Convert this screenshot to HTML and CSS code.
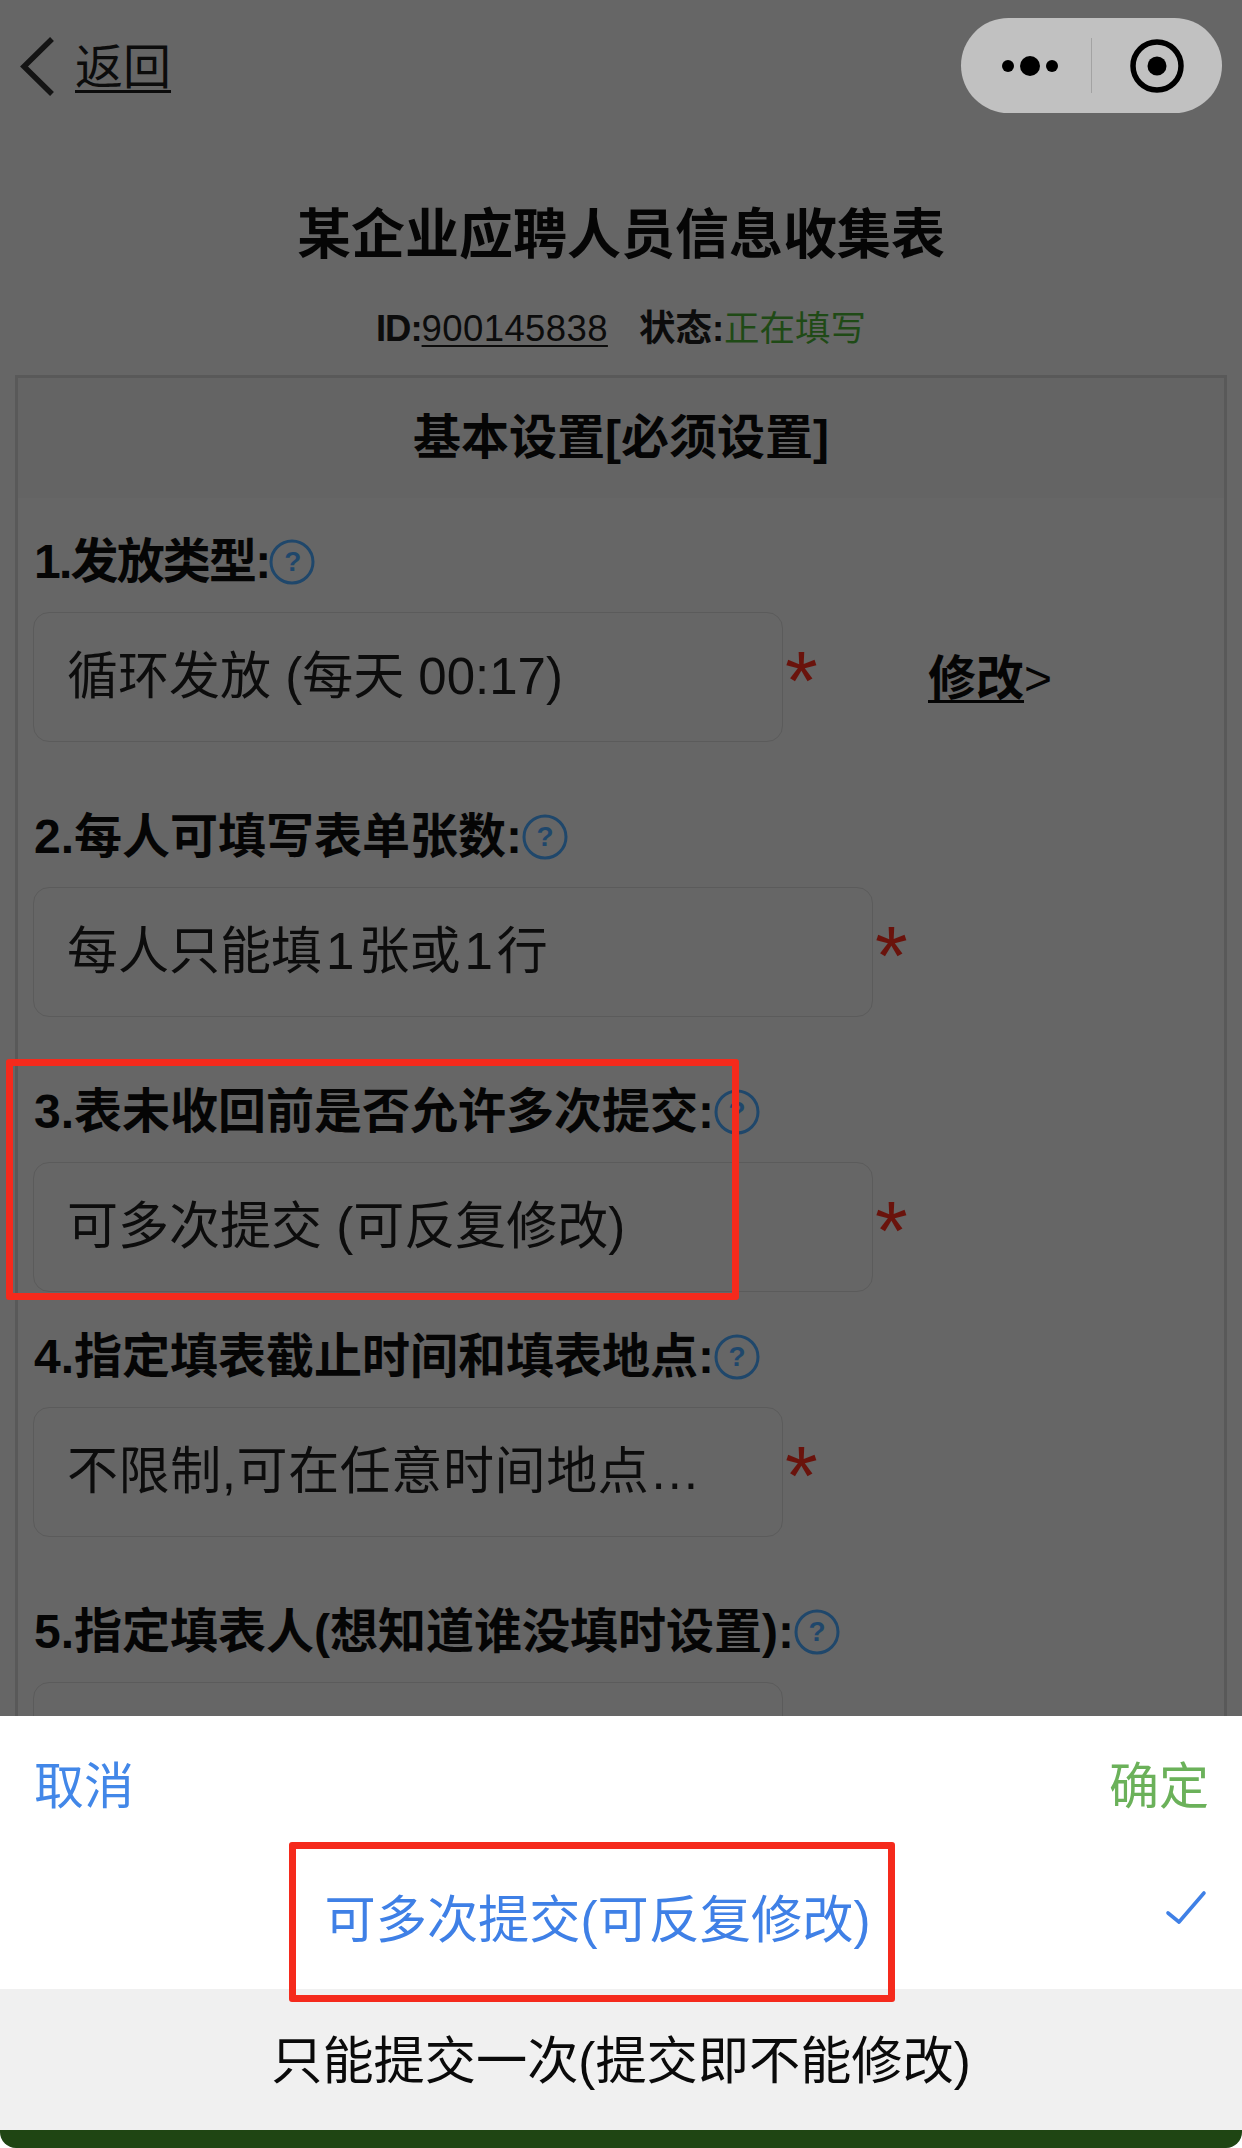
FILE: index.html
```html
<!DOCTYPE html>
<html lang="zh-CN">
<head>
<meta charset="utf-8">
<title>某企业应聘人员信息收集表</title>
<link rel="stylesheet" href="styles.css">
</head>
<body>
<div class="page">
  <header class="nav">
    <a class="back">
      <svg class="chevron" width="36" height="60" viewBox="0 0 36 60"><polyline points="33,2 5,29.5 33,57" fill="none" stroke="#141414" stroke-width="5.5"/></svg>
      <span class="back-text">返回</span>
    </a>
    <div class="capsule">
      <div class="cap-part cap-more">
        <svg width="60" height="24" viewBox="0 0 60 24"><circle cx="8" cy="12" r="6"/><circle cx="30" cy="12" r="10"/><circle cx="52" cy="12" r="6"/></svg>
      </div>
      <div class="cap-divider"></div>
      <div class="cap-part">
        <svg width="58" height="58" viewBox="0 0 58 58"><circle cx="29" cy="29" r="24" fill="none" stroke="#000" stroke-width="5.5"/><circle cx="29" cy="29" r="9.5"/></svg>
      </div>
    </div>
  </header>

  <h1 class="title">某企业应聘人员信息收集表</h1>
  <p class="meta">
    <span class="meta-item"><b class="meta-key">ID:</b><span class="meta-id">900145838</span></span>
    <span class="meta-item"><b>状态:</b><span class="meta-status">正在填写</span></span>
  </p>

  <section class="box">
    <h2 class="box-head">基本设置[必须设置]</h2>
    <div class="rows">
      <div class="row">
        <div class="label label-narrow">1.发放类型:<svg class="help" viewBox="0 0 46 46"><circle cx="23" cy="23" r="21" fill="none" stroke="#1f476b" stroke-width="3"/><text x="23" y="32" text-anchor="middle" class="help-mark">?</text></svg></div>
        <div class="control">
          <div class="field field-short">循环发放 (每天 00:17)</div>
          <span class="star">*</span>
          <a class="edit"><span class="edit-text">修改</span>&gt;</a>
        </div>
      </div>
      <div class="row">
        <div class="label">2.每人可填写表单张数:<svg class="help" viewBox="0 0 46 46"><circle cx="23" cy="23" r="21" fill="none" stroke="#1f476b" stroke-width="3"/><text x="23" y="32" text-anchor="middle" class="help-mark">?</text></svg></div>
        <div class="control">
          <div class="field field-long">每人只能填<span class="num">1</span>张或<span class="num">1</span>行</div>
          <span class="star">*</span>
        </div>
      </div>
      <div class="row row-tight">
        <div class="label">3.表未收回前是否允许多次提交:<svg class="help" viewBox="0 0 46 46"><circle cx="23" cy="23" r="21" fill="none" stroke="#1f476b" stroke-width="3"/><text x="23" y="32" text-anchor="middle" class="help-mark">?</text></svg></div>
        <div class="control">
          <div class="field field-long">可多次提交 (可反复修改)</div>
          <span class="star">*</span>
        </div>
      </div>
      <div class="row">
        <div class="label">4.指定填表截止时间和填表地点:<svg class="help" viewBox="0 0 46 46"><circle cx="23" cy="23" r="21" fill="none" stroke="#1f476b" stroke-width="3"/><text x="23" y="32" text-anchor="middle" class="help-mark">?</text></svg></div>
        <div class="control">
          <div class="field field-short field-spaced">不限制,可在任意时间地点…</div>
          <span class="star">*</span>
        </div>
      </div>
      <div class="row">
        <div class="label">5.指定填表人(想知道谁没填时设置):<svg class="help" viewBox="0 0 46 46"><circle cx="23" cy="23" r="21" fill="none" stroke="#1f476b" stroke-width="3"/><text x="23" y="32" text-anchor="middle" class="help-mark">?</text></svg></div>
        <div class="control">
          <div class="field field-short"></div>
        </div>
      </div>
    </div>
  </section>

  <div class="sheet">
    <div class="sheet-head">
      <span class="sheet-cancel">取消</span>
      <span class="sheet-ok">确定</span>
    </div>
    <div class="option option-selected">
      <span class="option-text">可多次提交(可反复修改)</span>
      <svg class="check" width="46" height="40" viewBox="0 0 46 40"><polyline points="3,23 14,32 39,3" fill="none" stroke="#3f80e6" stroke-width="3.6" stroke-linecap="round" stroke-linejoin="round"/></svg>
    </div>
    <div class="option option-plain">只能提交一次(提交即不能修改)</div>
    <div class="sheet-bar"></div>
  </div>

  <div class="mark mark-field"></div>
  <div class="mark mark-option"></div>
</div>
</body>
</html>
```
FILE: styles.css
```css
* { box-sizing: border-box; }
html, body { margin: 0; padding: 0; }
body { background: #666; }
.page {
  position: relative;
  width: 1242px;
  height: 2148px;
  overflow: hidden;
  background: #666;
  color: #050505;
  font-family: "Liberation Sans", "Noto Sans CJK SC", sans-serif;
}

/* navigation */
.nav {
  display: flex;
  justify-content: space-between;
  align-items: flex-start;
  height: 131px;
  padding: 18px 20px 0 19px;
}
.back { display: flex; align-items: center; height: 95px; }
.chevron { display: block; margin-top: 2px; }
.back-text {
  margin: 5px 0 0 20px;
  font-size: 48px;
  line-height: 60px;
  color: #0c0c0c;
  text-decoration: underline;
  text-underline-offset: 6px;
  text-decoration-thickness: 3px;
}
.capsule {
  display: flex;
  align-items: center;
  width: 261px;
  height: 95px;
  border-radius: 48px;
  background: #c1c1c1;
}
.cap-part { flex: 1; display: flex; justify-content: center; align-items: center; }
.cap-part svg { display: block; }
.cap-more { flex: none; width: 130px; padding-left: 8px; }
.cap-divider { width: 1px; height: 55px; background: #a3a3a3; }

/* heading */
.title {
  margin: 64px 0 0;
  font-size: 54px;
  line-height: 80px;
  font-weight: 700;
  text-align: center;
}
.meta {
  display: flex;
  justify-content: center;
  gap: 31px;
  margin: 34px 0 0;
  font-size: 36.5px;
  line-height: 40px;
  color: #0c0c0c;
}
.meta-item b { font-weight: 700; }
.meta-item .meta-key { letter-spacing: -1px; }
.meta-id {
  font-weight: 400;
  letter-spacing: 0.4px;
  text-decoration: underline;
  text-underline-offset: 4px;
  text-decoration-thickness: 2px;
}
.meta-status { font-size: 35.5px; color: #1f4a16; }

/* settings box */
.box {
  width: 1212px;
  height: 1800px;
  margin: 26px 0 0 15px;
  border: 3px solid #595959;
}
.box-head {
  margin: 0;
  height: 120px;
  background: #646464;
  font-size: 48px;
  line-height: 120px;
  font-weight: 700;
  text-align: center;
}
.rows { padding: 38px 0 0 15px; }
.row { margin-bottom: 69px; }
.row-tight { margin-bottom: 39px; }
.label {
  display: flex;
  align-items: center;
  height: 50px;
  padding: 1px 0 0 1px;
  font-size: 48px;
  line-height: 50px;
  font-weight: 700;
}
.label-narrow { letter-spacing: -1.8px; }
.help { width: 46px; height: 46px; flex: none; }
.help-mark {
  font-family: "Liberation Sans", sans-serif;
  font-size: 28px;
  font-weight: 700;
  fill: #1f476b;
}
.control { display: flex; align-items: center; margin-top: 26px; }
.field {
  height: 130px;
  padding: 0 33px;
  border: 1px solid #5b5b5b;
  border-radius: 16px;
  font-size: 51px;
  line-height: 128px;
  white-space: nowrap;
  color: #0c0c0c;
}
.field-short { width: 750px; }
.field-long { width: 840px; }
.field-spaced { letter-spacing: 0.6px; }
.num { margin: 0 4px; }
.star {
  align-self: flex-start;
  width: 32px;
  margin: 27px 0 0 2px;
  font-family: "Liberation Sans", sans-serif;
  font-size: 84px;
  line-height: 84px;
  color: #6a130c;
}
.edit { margin: 3px 0 0 111px; font-size: 48px; line-height: 60px; }
.edit-text {
  font-weight: 700;
  text-decoration: underline;
  text-underline-offset: 5px;
  text-decoration-thickness: 3px;
}

/* bottom sheet */
.sheet {
  position: absolute;
  left: 0;
  right: 0;
  bottom: 0;
  display: flex;
  flex-direction: column;
  height: 432px;
  background: #fff;
}
.sheet-head {
  display: flex;
  justify-content: space-between;
  align-items: center;
  height: 132px;
  padding: 0 33px 0 34px;
  font-size: 50px;
}
.sheet-cancel { color: #4287e8; }
.sheet-ok { color: #6bb15a; }
.option {
  display: flex;
  justify-content: center;
  align-items: center;
  height: 141px;
  padding-bottom: 5px;
  font-size: 51.2px;
}
.option-selected { position: relative; padding-right: 47px; color: #3f80e6; }
.check { position: absolute; right: 31px; top: 42px; }
.option-plain { background: #f0f0f0; color: #0a0a0a; }
.sheet-bar {
  height: 18px;
  background: #1f4513;
  border-radius: 0 0 16px 16px;
}

/* annotation frames */
.mark {
  position: absolute;
  border: 7px solid #f52a1c;
  border-radius: 3px;
}
.mark-field { left: 6px; top: 1059px; width: 733px; height: 241px; }
.mark-option { left: 289px; top: 1842px; width: 606px; height: 160px; }
```
